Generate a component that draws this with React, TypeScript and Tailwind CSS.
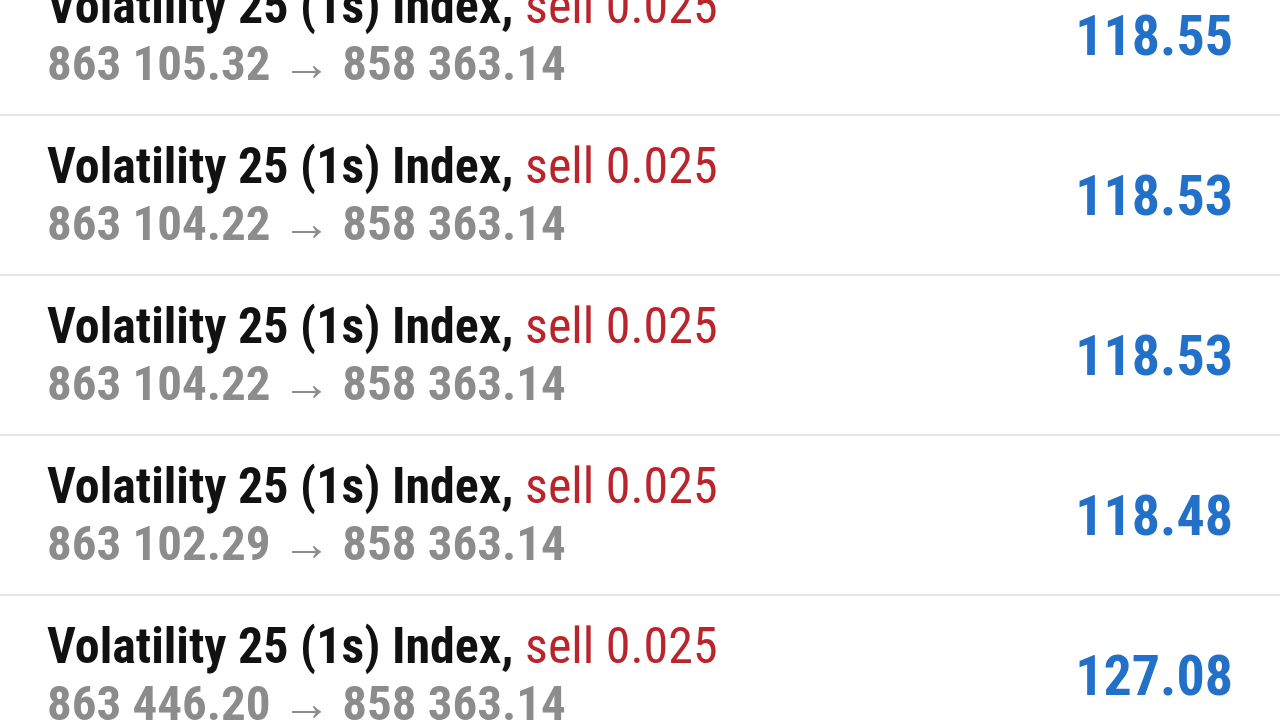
import React from "react";

type Deal = { from: string; to: string; profit: string };

const deals: Deal[] = [
  { from: "863 105.32", to: "858 363.14", profit: "118.55" },
  { from: "863 104.22", to: "858 363.14", profit: "118.53" },
  { from: "863 104.22", to: "858 363.14", profit: "118.53" },
  { from: "863 102.29", to: "858 363.14", profit: "118.48" },
  { from: "863 446.20", to: "858 363.14", profit: "127.08" },
];

const DealRow: React.FC<{ deal: Deal }> = ({ deal }) => (
  <div className="flex items-center justify-between px-[47px] py-[22px] border-b-2 border-[#e4e4e4]">
    <div className="flex flex-col text-[50px] leading-[57px]">
      <div className="whitespace-nowrap">
        <span className="font-bold text-[#111111]">Volatility 25 (1s) Index,</span>{" "}
        <span className="font-normal text-[#b8262c]">sell 0.025</span>
      </div>
      <div className="whitespace-nowrap text-[49px] font-bold text-[#8c8c8c]">
        {deal.from} <span className="font-normal">→</span> {deal.to}
      </div>
    </div>
    <div className="pt-[2px] text-[56px] font-bold text-[#2370c8]">{deal.profit}</div>
  </div>
);

export default function App() {
  return (
    <div
      className="w-[1280px] h-[720px] overflow-hidden bg-white font-stretch-condensed"
      style={{ fontFamily: '"Roboto Condensed", Roboto, "Liberation Sans", sans-serif' }}
    >
      <div className="-mt-[44px]">
        {deals.map((d, i) => (
          <DealRow key={i} deal={d} />
        ))}
      </div>
    </div>
  );
}
